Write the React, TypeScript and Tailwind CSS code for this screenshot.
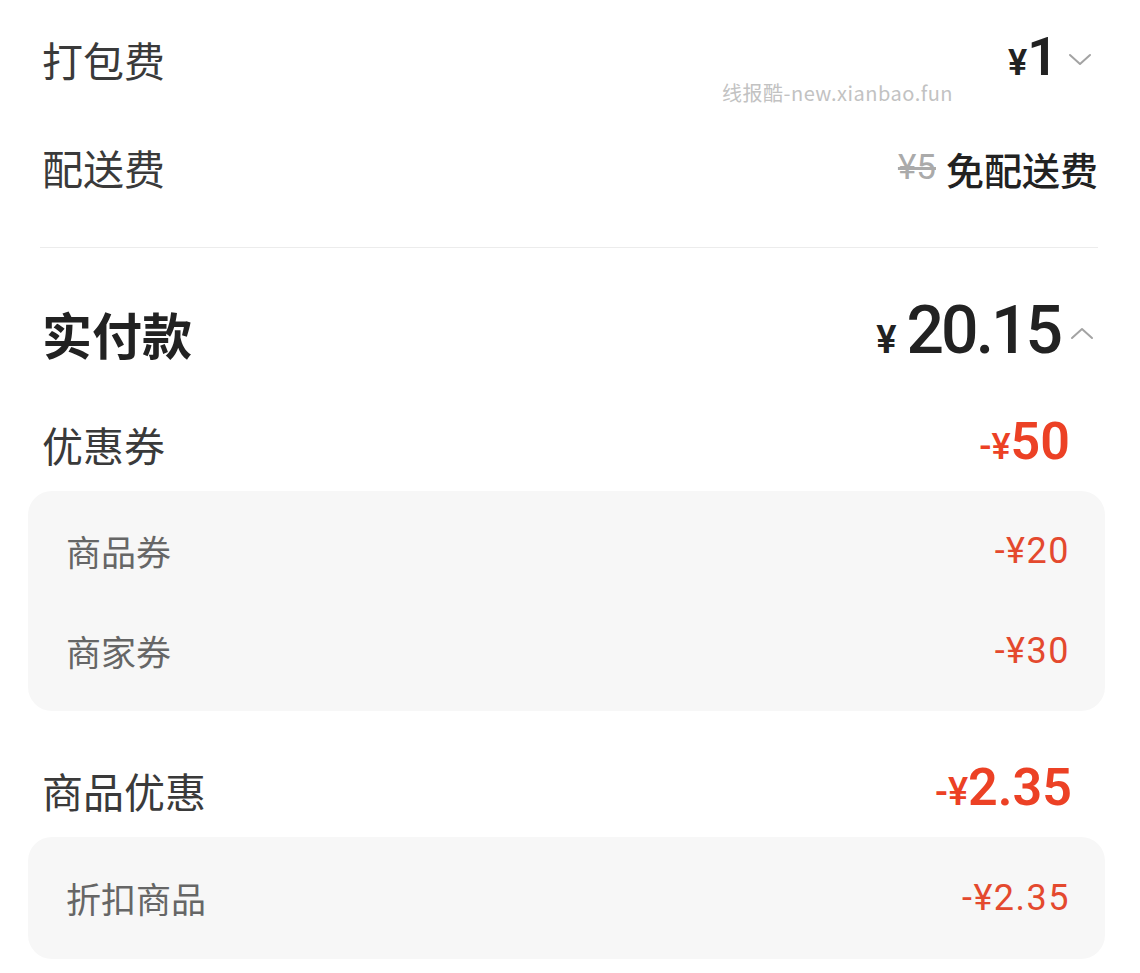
import React from "react";

const num = { fontFamily: 'Roboto, "Noto Sans CJK SC", sans-serif' };
const cjk = { fontFamily: '"Noto Sans CJK SC", "Noto Sans", sans-serif' };

function Chevron({ up }: { up?: boolean }) {
  return (
    <svg width="24" height="14" viewBox="0 0 24 14" className="ml-[10px]">
      <polyline
        points={up ? "2,12 12,3 22,12" : "2,2 12,11 22,2"}
        fill="none"
        stroke="#a3a3a3"
        strokeWidth="2"
        strokeLinecap="round"
        strokeLinejoin="round"
      />
    </svg>
  );
}

type Sub = { label: string; value: string };

function SubBox({ items, className }: { items: Sub[]; className?: string }) {
  return (
    <div className={`-ml-[12px] -mr-[7px] rounded-[24px] bg-[#f7f7f7] pl-[38px] pr-[35px] ${className ?? ""}`}>
      {items.map((it) => (
        <div key={it.label} className="flex h-[100px] items-center justify-between">
          <span className="text-[35px] text-[#666]" style={cjk}>
            {it.label}
          </span>
          <span className="text-[36px] tracking-[1.5px] text-[#e4492e]" style={num}>
            {it.value}
          </span>
        </div>
      ))}
    </div>
  );
}

export default function App() {
  return (
    <div className="relative h-[973px] w-[1140px] overflow-hidden bg-white pl-[40px] pr-[42px]">
      {/* 打包费 */}
      <div className="flex h-[120px] items-center justify-between">
        <span className="pl-[2px] text-[41px] text-[#3a3a3a]" style={cjk}>
          打包费
        </span>
        <div className="flex items-center pr-[6px]">
          <span className="flex items-baseline font-semibold text-[#222]" style={num}>
            <span className="text-[36px]">¥</span>
            <span className="text-[54px] leading-none">1</span>
          </span>
          <Chevron />
        </div>
      </div>

      {/* 配送费 */}
      <div className="flex h-[96px] items-center justify-between">
        <span className="pl-[2px] text-[41px] text-[#3a3a3a]" style={cjk}>
          配送费
        </span>
        <div className="flex items-center gap-[10px]">
          <span className="text-[35px] text-[#aaa] line-through" style={num}>
            ¥5
          </span>
          <span className="text-[38px] font-medium text-[#222]" style={cjk}>
            免配送费
          </span>
        </div>
      </div>

      <div className="mt-[31px] h-px bg-[#ececec]" />

      {/* 实付款 */}
      <div className="flex h-[170px] items-center justify-between">
        <span className="pl-[2px] text-[50px] font-bold text-[#222]" style={cjk}>
          实付款
        </span>
        <div className="flex items-center pr-[4px]">
          <span className="flex items-baseline text-[#222]" style={num}>
            <span className="mr-[10px] text-[38px] font-semibold">¥</span>
            <span className="text-[66px] font-medium leading-none tracking-[-3px]">20.15</span>
          </span>
          <Chevron up />
        </div>
      </div>

      {/* 优惠券 */}
      <div className="flex h-[54px] items-center justify-between">
        <span className="pl-[2px] text-[41px] text-[#3a3a3a]" style={cjk}>
          优惠券
        </span>
        <span className="flex items-baseline pr-[28px] font-semibold text-[#ec4125]" style={num}>
          <span className="text-[36px] font-medium">-¥</span>
          <span className="text-[52px] leading-none">50</span>
        </span>
      </div>

      <SubBox
        className="mt-[19px] py-[10px]"
        items={[
          { label: "商品券", value: "-¥20" },
          { label: "商家券", value: "-¥30" },
        ]}
      />

      {/* 商品优惠 */}
      <div className="mt-[40px] flex h-[80px] items-center justify-between">
        <span className="pl-[2px] text-[41px] text-[#3a3a3a]" style={cjk}>
          商品优惠
        </span>
        <span className="flex items-baseline pr-[26px] font-semibold text-[#ec4125]" style={num}>
          <span className="text-[38px] font-medium">-¥</span>
          <span className="text-[52px] leading-none">2.35</span>
        </span>
      </div>

      <SubBox className="mt-[6px] py-[11px]" items={[{ label: "折扣商品", value: "-¥2.35" }]} />

      {/* watermark */}
      <div
        className="absolute left-[722px] top-[78px] text-[20px] tracking-[0.5px] text-[#c2c2c2]"
        style={cjk}
      >
        线报酷-new.xianbao.fun
      </div>
    </div>
  );
}
